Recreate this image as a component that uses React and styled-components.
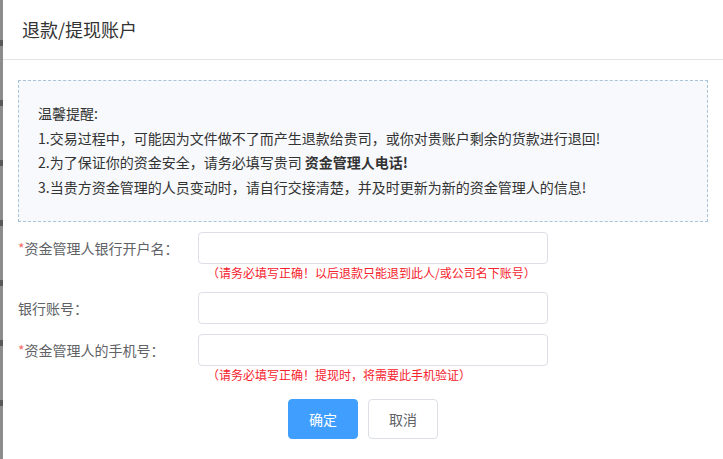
import React from 'react';
import styled, { createGlobalStyle } from 'styled-components';

const GlobalStyle = createGlobalStyle`
  html, body {
    margin: 0;
    padding: 0;
    background: #ffffff;
  }
  body {
    font-family: "Noto Sans CJK SC", "Liberation Sans", sans-serif;
    font-size: 14px;
    color: #333333;
  }
  * {
    box-sizing: border-box;
  }
`;

const tips = [
  '1.交易过程中，可能因为文件做不了而产生退款给贵司，或你对贵账户剩余的货款进行退回!',
  '3.当贵方资金管理的人员变动时，请自行交接清楚，并及时更新为新的资金管理人的信息!',
];

const fields = [
  {
    label: '资金管理人银行开户名：',
    required: true,
    hint: '（请务必填写正确！以后退款只能退到此人/或公司名下账号）',
  },
  { label: '银行账号：', required: false },
  {
    label: '资金管理人的手机号：',
    required: true,
    hint: '（请务必填写正确！提现时，将需要此手机验证）',
  },
];

const App = () => {
  return (
    <Page>
      <GlobalStyle />
      <Backdrop />
      <Dialog>
        <Header>
          <Title>退款/提现账户</Title>
        </Header>
        <Body>
          <TipBox>
            <TipLine>温馨提醒:</TipLine>
            <TipLine>{tips[0]}</TipLine>
            <TipLine>
              2.为了保证你的资金安全，请务必填写贵司 <strong>资金管理人电话!</strong>
            </TipLine>
            <TipLine>{tips[1]}</TipLine>
          </TipBox>
          <Form>
            {fields.map((field) => (
              <FormRow key={field.label}>
                <Label>
                  {field.required && <Star>*</Star>}
                  {field.label}
                </Label>
                <FieldColumn>
                  <Input type="text" />
                  {field.hint && <Hint>{field.hint}</Hint>}
                </FieldColumn>
              </FormRow>
            ))}
          </Form>
          <Actions>
            <Button primary>确定</Button>
            <Button>取消</Button>
          </Actions>
        </Body>
      </Dialog>
    </Page>
  );
};

export default App;

const Page = styled.div`
  display: flex;
  width: 723px;
  height: 459px;
  overflow: hidden;
`;

const Backdrop = styled.div`
  flex: 0 0 3px;
  background: repeating-linear-gradient(
    180deg,
    #8c8c8c 0px,
    #8c8c8c 40px,
    #5a5a5a 40px,
    #5a5a5a 46px,
    #8c8c8c 46px,
    #8c8c8c 60px
  );
`;

const Dialog = styled.div`
  flex: 1;
  background: #ffffff;
  display: flex;
  flex-direction: column;
`;

const Header = styled.div`
  height: 60px;
  display: flex;
  align-items: center;
  padding: 0 19px 1px;
  border-bottom: 1px solid #e4e4e4;
`;

const Title = styled.h3`
  margin: 0;
  font-size: 18px;
  font-weight: normal;
  color: #333333;
`;

const Body = styled.div`
  padding: 20px 15px 0;
`;

const TipBox = styled.div`
  border: 1px dashed #a9c4d6;
  background: #f7f9fc;
  padding: 20px 19px 22px;
`;

const TipLine = styled.p`
  margin: 0;
  line-height: 24.5px;
  font-size: 14px;
  color: #333333;
  white-space: nowrap;

  strong {
    font-weight: bold;
  }
`;

const Form = styled.div`
  margin-top: 10px;
  display: flex;
  flex-direction: column;
`;

const FormRow = styled.div`
  display: flex;
  align-items: flex-start;
  margin-bottom: 10px;
`;

const Label = styled.label`
  width: 180px;
  height: 32px;
  line-height: 32px;
  font-size: 14px;
  color: #606266;
  white-space: nowrap;
`;

const Star = styled.span`
  color: #f56c6c;
`;

const FieldColumn = styled.div`
  display: flex;
  flex-direction: column;
`;

const Input = styled.input`
  width: 350px;
  height: 32px;
  border: 1px solid #dcdfe6;
  border-radius: 4px;
  padding: 0 12px;
  font-size: 14px;
  outline: none;
  background: #ffffff;
`;

const Hint = styled.span`
  padding-left: 9px;
  line-height: 18px;
  font-size: 12px;
  color: #f5222d;
  white-space: nowrap;
`;

const Actions = styled.div`
  display: flex;
  justify-content: center;
  gap: 10px;
  margin-top: 5px;
`;

const Button = styled.button`
  width: 70px;
  height: 40px;
  border-radius: 4px;
  font-family: inherit;
  font-size: 14px;
  cursor: pointer;
  border: 1px solid ${(props) => (props.primary ? '#409eff' : '#dcdfe6')};
  background: ${(props) => (props.primary ? '#409eff' : '#ffffff')};
  color: ${(props) => (props.primary ? '#ffffff' : '#606266')};
`;
